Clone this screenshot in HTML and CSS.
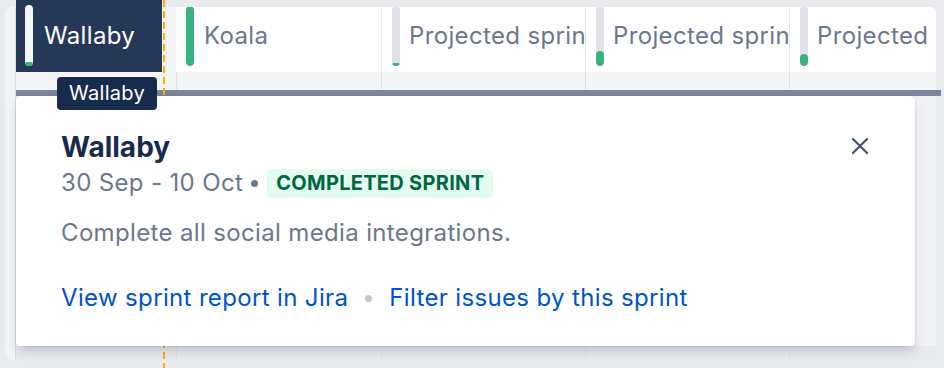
FILE: index.html
```html
<!DOCTYPE html>
<html lang="en">
<head>
  <meta charset="UTF-8">
  <title>Sprint timeline</title>
  <link rel="stylesheet" href="styles.css">
</head>
<body>
  <div class="frame">
    <div class="gutter"></div>
    <div class="timeline">
      <div class="tabs">
        <div class="tab tab-active">
          <span class="bar"><span class="fill" style="height:7%"></span></span>
          <span class="tab-name">Wallaby</span>
        </div>
        <div class="tab-gap"></div>
        <div class="tab tab-koala">
          <span class="bar"><span class="fill" style="height:100%"></span></span>
          <span class="tab-name">Koala</span>
        </div>
        <div class="tab tab-projected">
          <span class="bar"><span class="fill" style="height:5%"></span></span>
          <span class="tab-name">Projected sprint 1</span>
        </div>
        <div class="tab tab-projected">
          <span class="bar"><span class="fill" style="height:25%"></span></span>
          <span class="tab-name">Projected sprint 2</span>
        </div>
        <div class="tab tab-projected tab-last">
          <span class="bar"><span class="fill" style="height:20%"></span></span>
          <span class="tab-name">Projected sprint 3</span>
        </div>
      </div>

      <div class="cols subhead">
        <div class="col col-first"></div>
        <div class="col col-koala"></div>
        <div class="col"></div>
        <div class="col"></div>
        <div class="col col-last"></div>
      </div>

      <div class="slate"></div>

      <div class="cols lane">
        <div class="col col-first"></div>
        <div class="col col-koala"></div>
        <div class="col"></div>
        <div class="col"></div>
        <div class="col col-last"></div>
      </div>
      <div class="cols lane-bottom">
        <div class="col col-first"></div>
        <div class="col col-koala"></div>
        <div class="col"></div>
        <div class="col"></div>
        <div class="col col-last"></div>
      </div>
    </div>
  </div>

  <!-- today marker -->
  <div class="today"></div>

  <div class="popup">
    <button class="close" aria-label="Close">
      <svg width="18" height="18" viewBox="0 0 18 18">
        <path d="M2 2 L16 16 M16 2 L2 16" stroke="#42526e" stroke-width="2.2" stroke-linecap="round" fill="none"/>
      </svg>
    </button>
    <div class="popup-title">Wallaby</div>
    <div class="popup-meta">
      <span>30 Sep - 10 Oct</span>
      <span class="dot"></span>
      <span class="lozenge">Completed sprint</span>
    </div>
    <div class="popup-desc">Complete all social media integrations.</div>
    <div class="popup-links">
      <a href="#">View sprint report in Jira</a>
      <span class="dot dot-light"></span>
      <a href="#">Filter issues by this sprint</a>
    </div>
  </div>

  <div class="tooltip">Wallaby</div>
</body>
</html>
```

FILE: styles.css
```css
body {
  margin: 0;
  width: 944px;
  height: 368px;
  overflow: hidden;
  position: relative;
  background: #e9eaee;
  font-family: 'Inter', 'Noto Sans', sans-serif;
}

.frame {
  display: flex;
  margin: 7px 8px 0 5px;
  height: 353px;
  background: #f3f4f6;
  border-radius: 6px;
}

.gutter {
  width: 10px;
  border-right: 1px solid #d9dce2;
}

.timeline {
  flex: 1;
  min-width: 0;
  display: flex;
  flex-direction: column;
}

/* sprint tabs */
.tabs {
  display: flex;
  height: 65px;
  flex-shrink: 0;
}

.tab {
  display: flex;
  align-items: flex-start;
  gap: 10px;
  box-sizing: border-box;
  padding-left: 10px;
  background: #fff;
  overflow: hidden;
  white-space: nowrap;
}

.bar {
  position: relative;
  flex-shrink: 0;
  width: 8px;
  height: 60px;
  margin-top: -1px;
  border-radius: 4px;
  background: #dfe1e6;
  overflow: hidden;
}

.fill {
  position: absolute;
  left: 0;
  right: 0;
  bottom: 0;
  border-radius: 4px;
  background: #36b37e;
}

.tab-name {
  font-size: 24px;
  line-height: 30px;
  letter-spacing: 0.35px;
  margin-top: 14px;
  color: #6b778c;
}

.tab-active {
  width: 146px;
  height: 72px;
  margin-top: -7px;
  padding-left: 9px;
  gap: 11px;
  background: #253858;
}

.tab-active .bar {
  height: 61px;
  margin-top: 5px;
  background: #f4f5f7;
}

.tab-active .tab-name {
  color: #fff;
  margin-top: 21px;
}

.tab-gap {
  width: 14px;
}

.tab-koala {
  width: 205px;
}

.tab-projected {
  width: 204px;
  padding-left: 10px;
  gap: 9px;
  border-left: 1px solid #e4e6ea;
}

.tab-last {
  flex: 1;
  border-top-right-radius: 6px;
}

/* column grid */
.cols {
  display: flex;
}

.col {
  box-sizing: border-box;
  width: 204px;
  border-left: 1px solid #dfe1e6;
}

.col-first {
  width: 160px;
  border-left: none;
}

.col-koala {
  width: 205px;
}

.col-last {
  flex: 1;
}

.subhead {
  height: 18px;
  background: #f4f5f7;
}

.slate {
  height: 6px;
  margin-right: -5px;
  background: #7a869a;
}

.lane {
  flex: 1;
  background: #f1f2f4;
}

.lane-bottom {
  height: 14px;
  background: #e8e9ed;
  border-bottom-right-radius: 6px;
}

.today {
  position: absolute;
  left: 163px;
  top: 0;
  width: 2px;
  height: 368px;
  background: repeating-linear-gradient(to bottom, #ffab00 0 7px, transparent 7px 11px);
}

.tooltip {
  position: absolute;
  left: 57px;
  top: 77px;
  width: 100px;
  height: 33px;
  border-radius: 4px;
  background: #172b4d;
  color: #fff;
  font-size: 20px;
  line-height: 33px;
  letter-spacing: 0.3px;
  text-align: center;
}

/* sprint popup */
.popup {
  position: absolute;
  left: 16px;
  top: 96px;
  width: 899px;
  height: 250px;
  box-sizing: border-box;
  padding: 34px 45px 0;
  background: #fff;
  border-radius: 4px;
  box-shadow: 0 6px 12px -3px rgba(9, 30, 66, 0.25), 0 0 1px rgba(9, 30, 66, 0.31);
}

.close {
  position: absolute;
  left: 835px;
  top: 41px;
  padding: 0;
  border: none;
  background: none;
  line-height: 0;
}

.popup-title {
  font-size: 28px;
  line-height: 34px;
  font-weight: 700;
  color: #172b4d;
}

.popup-meta {
  display: flex;
  align-items: center;
  margin-top: 4px;
  font-size: 24px;
  line-height: 30px;
  letter-spacing: 0.35px;
  color: #6b778c;
}

.dot {
  width: 7px;
  height: 7px;
  border-radius: 50%;
  background: #6b778c;
  margin: 0 9px 0 8px;
}

.lozenge {
  height: 29px;
  padding: 0 9px;
  border-radius: 5px;
  background: #e3fcef;
  color: #006644;
  font-size: 20px;
  line-height: 29px;
  letter-spacing: 0.3px;
  font-weight: 700;
  text-transform: uppercase;
}

.popup-desc {
  margin-top: 20px;
  font-size: 24px;
  line-height: 30px;
  letter-spacing: 0.35px;
  color: #6b778c;
}

.popup-links {
  display: flex;
  align-items: center;
  margin-top: 35px;
  font-size: 24px;
  line-height: 30px;
  letter-spacing: 0.35px;
}

.popup-links a {
  color: #0052cc;
  text-decoration: none;
}

.dot-light {
  background: #c1c7d0;
  margin: 0 17px;
}
```
